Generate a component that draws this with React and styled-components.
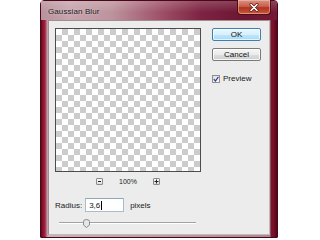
import React from 'react';
import styled, { createGlobalStyle } from 'styled-components';

const Global = createGlobalStyle`
  html, body { margin: 0; padding: 0; background: #ffffff; }
  body {
    width: 320px; height: 240px; overflow: hidden;
    font-family: "Liberation Sans", Arial, sans-serif;
    color: #111;
  }
  * { box-sizing: border-box; }
`;

const Stage = styled.div`
  width: 320px;
  height: 240px;
  padding-left: 40px;
`;

const Window = styled.div`
  width: 238px;
  height: 238px;
  display: flex;
  flex-direction: column;
  padding: 0 7px 2px 7px;
  border: 1px solid #4a0716;
  border-radius: 4px 4px 1px 1px;
  background: linear-gradient(
    90deg,
    #5c0a1c 0px,
    #8e1232 2px,
    #a5203f 4px,
    #b88f99 6px,
    #c9b2b8 7px,
    #a98a92 calc(100% - 7px),
    #6e1a30 calc(100% - 6px),
    #7f0f2c calc(100% - 4px),
    #6a0c22 calc(100% - 2px),
    #4c0616 100%
  );
`;

const TitleBar = styled.div`
  height: 19px;
  margin: 0 -7px;
  padding: 0 6px 0 7px;
  display: flex;
  align-items: center;
  justify-content: space-between;
  background:
    linear-gradient(180deg, rgba(255,255,255,0.18) 0%, rgba(255,255,255,0) 60%),
    linear-gradient(90deg, #b8929c 0%, #c7a5ae 12%, #bd939d 30%, #9c4d66 52%, #7c2341 68%, #6d1733 85%, #741a36 100%);
`;

const Title = styled.span`
  font-size: 8px;
  color: #1c1c1c;
  text-shadow: 0 0 3px rgba(255,255,255,0.6);
  letter-spacing: 0.1px;
  padding-top: 1px;
`;

const CloseButton = styled.div`
  align-self: flex-start;
  margin-top: -1px;
  width: 34px;
  height: 15px;
  display: flex;
  align-items: center;
  justify-content: center;
  border: 1px solid #4f0d12;
  border-top: none;
  border-radius: 0 0 4px 4px;
  background: linear-gradient(180deg, #d99284 0%, #c9604c 45%, #b1321f 55%, #c85a40 100%);
  box-shadow: inset 0 0 0 1px rgba(255, 210, 200, 0.45);
`;

const Client = styled.div`
  flex: 1;
  display: flex;
  padding: 7px 0 0 6px;
  background: #ececec;
  border: 1px solid #a48c93;
  border-right-color: #c8b8bc;
  border-bottom-color: #c8b8bc;
`;

const LeftCol = styled.div`
  width: 146px;
  display: flex;
  flex-direction: column;
`;

const RightCol = styled.div`
  width: 49px;
  margin-left: 11px;
  display: flex;
  flex-direction: column;
`;

const Preview = styled.div`
  width: 146px;
  height: 144px;
  border: 1px solid #4c4c4c;
  background-color: #ffffff;
  background-image: conic-gradient(#cccccc 25%, #ffffff 0 50%, #cccccc 0 75%, #ffffff 0);
  background-size: 12px 12px;
`;

const ZoomRow = styled.div`
  margin-top: 5px;
  height: 8px;
  display: flex;
  align-items: center;
  justify-content: center;
  gap: 16px;
`;

const ZoomButton = styled.div`
  width: 7px;
  height: 7px;
  border: 1px solid #8a8a8a;
  border-radius: 1px;
  background: linear-gradient(180deg, #fafafa, #dedede);
  display: flex;
  align-items: center;
  justify-content: center;
  font-size: 7px;
  line-height: 1;
  color: #222;
`;

const ZoomLabel = styled.span`
  font-size: 7px;
  color: #222;
  width: 18px;
  text-align: center;
`;

const RadiusRow = styled.div`
  margin-top: 13px;
  height: 14px;
  display: flex;
  align-items: center;
`;

const Label = styled.span`
  font-size: 8px;
  color: #1a1a1a;
`;

const Field = styled.div`
  width: 39px;
  height: 14px;
  margin-left: 3px;
  padding-left: 3px;
  display: flex;
  align-items: center;
  background: #ffffff;
  border: 1px solid #a9bdd1;
  border-top-color: #8ea6be;
  font-size: 8px;
  color: #111;
`;

const Caret = styled.span`
  display: inline-block;
  width: 1px;
  height: 9px;
  margin-left: 0.5px;
  background: #000;
`;

const Unit = styled.span`
  font-size: 8px;
  color: #1a1a1a;
  margin-left: 6px;
`;

const SliderRow = styled.div`
  position: relative;
  margin-top: 6px;
  margin-left: 4px;
  width: 137px;
  height: 10px;
  display: flex;
  align-items: center;
`;

const Track = styled.div`
  width: 100%;
  height: 2px;
  border-top: 1px solid #a3a3a3;
  border-bottom: 1px solid #ffffff;
`;

const Thumb = styled.svg`
  position: absolute;
  left: 24px;
  top: 1px;
`;

const Button = styled.div`
  height: 13px;
  width: 49px;
  margin-top: ${p => (p.$first ? '0' : '7px')};
  display: flex;
  align-items: center;
  justify-content: center;
  font-size: 8px;
  color: #111;
  border-radius: 2px;
  border: 1px solid ${p => (p.$default ? '#3c7fb1' : '#7a7a7a')};
  background: ${p =>
    p.$default
      ? 'linear-gradient(180deg, #eaf6fd 0%, #d9f0fc 50%, #bee6fd 51%, #a7d9f5 100%)'
      : 'linear-gradient(180deg, #f6f6f6 0%, #ebebeb 50%, #dddddd 51%, #cfcfcf 100%)'};
  box-shadow: inset 0 0 0 1px ${p => (p.$default ? 'rgba(255,255,255,0.7)' : 'rgba(255,255,255,0.8)')};
`;

const CheckRow = styled.div`
  margin-top: 13px;
  height: 9px;
  display: flex;
  align-items: center;
  gap: 3px;
`;

const CheckBox = styled.div`
  width: 8px;
  height: 8px;
  border: 1px solid #8e8f8f;
  background: linear-gradient(135deg, #dcdcdc, #fafafa);
  display: flex;
  align-items: center;
  justify-content: center;
`;

export default function App() {
  return (
    <Stage>
      <Global />
      <Window>
        <TitleBar>
          <Title>Gaussian Blur</Title>
          <CloseButton>
            <svg width="10" height="9" viewBox="0 0 10 9">
              <path d="M2 1.5 L8 7.5 M8 1.5 L2 7.5" stroke="#5a1a14" strokeWidth="3" strokeLinecap="round" />
              <path d="M2 1.5 L8 7.5 M8 1.5 L2 7.5" stroke="#ffffff" strokeWidth="1.6" strokeLinecap="round" />
            </svg>
          </CloseButton>
        </TitleBar>
        <Client>
          <LeftCol>
            <Preview />
            <ZoomRow>
              <ZoomButton>
                <svg width="5" height="5" viewBox="0 0 5 5"><path d="M1 2.5 H4" stroke="#222" strokeWidth="1" /></svg>
              </ZoomButton>
              <ZoomLabel>100%</ZoomLabel>
              <ZoomButton>
                <svg width="5" height="5" viewBox="0 0 5 5"><path d="M0.5 2.5 H4.5 M2.5 0.5 V4.5" stroke="#222" strokeWidth="1" /></svg>
              </ZoomButton>
            </ZoomRow>
            <RadiusRow>
              <Label>Radius:</Label>
              <Field>3,6<Caret /></Field>
              <Unit>pixels</Unit>
            </RadiusRow>
            <SliderRow>
              <Track />
              <Thumb width="7" height="9" viewBox="0 0 7 9">
                <path d="M0.5 2.5 Q0.5 0.5 3.5 0.5 Q6.5 0.5 6.5 2.5 V6 L3.5 8.5 L0.5 6 Z" fill="#e6e6e6" stroke="#8a8a8a" strokeWidth="1" />
              </Thumb>
            </SliderRow>
          </LeftCol>
          <RightCol>
            <Button $first $default>OK</Button>
            <Button>Cancel</Button>
            <CheckRow>
              <CheckBox>
                <svg width="6" height="6" viewBox="0 0 6 6">
                  <path d="M0.8 3.2 L2.4 5 L5.4 0.8" fill="none" stroke="#2a3f8f" strokeWidth="1.2" />
                </svg>
              </CheckBox>
              <Label>Preview</Label>
            </CheckRow>
          </RightCol>
        </Client>
      </Window>
    </Stage>
  );
}
